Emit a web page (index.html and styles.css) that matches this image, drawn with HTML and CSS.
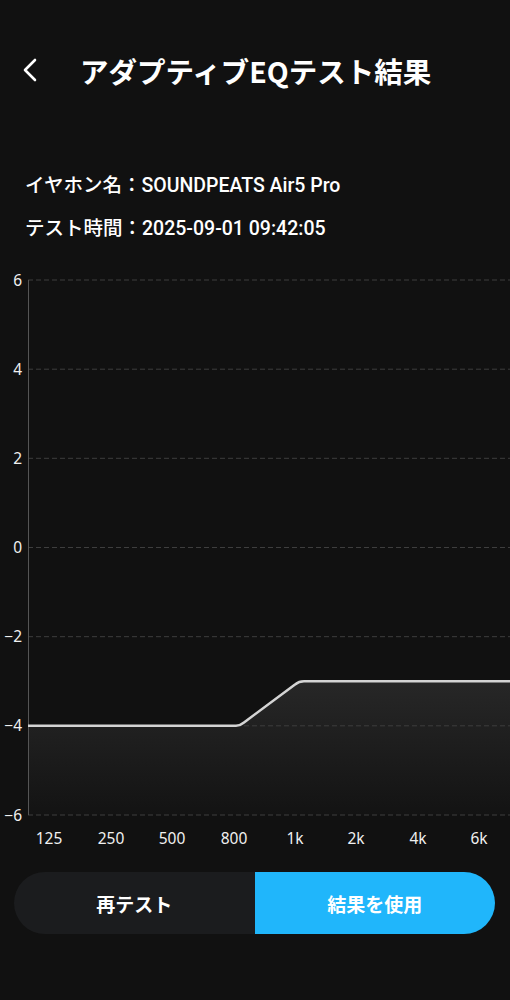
FILE: index.html
```html
<!DOCTYPE html>
<html lang="ja">

<head>
    <meta charset="UTF-8">
    <meta name="viewport" content="width=device-width, initial-scale=1.0">
    <title>アダプティブEQテスト結果</title>
    <link rel="stylesheet" href="styles.css">
</head>

<body>
    <header class="topbar">
        <a class="back" href="#">
            <svg width="20" height="26" viewBox="0 0 20 26">
                <path d="M15 3 L5 13 L15 23" fill="none" stroke="#fff" stroke-width="2.6" stroke-linecap="round" stroke-linejoin="round"/>
            </svg>
        </a>
        <h1>アダプティブEQテスト結果</h1>
    </header>

    <div class="info">
        <p>イヤホン名：SOUNDPEATS Air5 Pro</p>
        <p>テスト時間：2025-09-01 09:42:05</p>
    </div>

    <div class="chart">
        <svg width="510" height="580" viewBox="0 0 510 580">
            <defs>
                <linearGradient id="fillGrad" x1="0" y1="0" x2="0" y2="1">
                    <stop offset="0" stop-color="#272727"/>
                    <stop offset="1" stop-color="#131313"/>
                </linearGradient>
            </defs>
            <!-- 曲線の下の塗り -->
            <path d="M28,455.8 H236 Q240,455.8 244,452.5 L295,414.5 Q299,411.3 304,411.3 H510 V545 H28 Z" fill="url(#fillGrad)"/>
            <g class="grid">
                <line x1="28" y1="10" x2="510" y2="10"/>
                <line x1="28" y1="99.2" x2="510" y2="99.2"/>
                <line x1="28" y1="188.3" x2="510" y2="188.3"/>
                <line x1="28" y1="277.5" x2="510" y2="277.5"/>
                <line x1="28" y1="366.7" x2="510" y2="366.7"/>
                <line x1="28" y1="455.8" x2="510" y2="455.8"/>
                <line x1="28" y1="545" x2="510" y2="545"/>
            </g>
            <line class="axis" x1="28.5" y1="10" x2="28.5" y2="545"/>
            <path class="curve" d="M28,455.8 H236 Q240,455.8 244,452.5 L295,414.5 Q299,411.3 304,411.3 H510"/>
            <g class="ylabels">
                <text x="22" y="15.5">6</text>
                <text x="22" y="104.7">4</text>
                <text x="22" y="193.8">2</text>
                <text x="22" y="283">0</text>
                <text x="22" y="372.2">−2</text>
                <text x="22" y="461.3">−4</text>
                <text x="22" y="550.5">−6</text>
            </g>
            <g class="xlabels">
                <text x="49" y="573.5">125</text>
                <text x="111" y="573.5">250</text>
                <text x="172" y="573.5">500</text>
                <text x="234" y="573.5">800</text>
                <text x="295" y="573.5">1k</text>
                <text x="356" y="573.5">2k</text>
                <text x="418" y="573.5">4k</text>
                <text x="479" y="573.5">6k</text>
            </g>
        </svg>
    </div>

    <div class="actions">
        <button class="btn-retest">再テスト</button>
        <button class="btn-use">結果を使用</button>
    </div>
</body>

</html>
```
FILE: styles.css
```css
body {
    background-color: #111111;
    font-family: Roboto, "Noto Sans CJK JP", sans-serif;
    margin: 0;
    padding: 0;
    color: #fff;
    width: 510px;
}

.topbar {
    display: flex;
    align-items: center;
    height: 44px;
    padding-top: 48px;
    padding-bottom: 3px;
}

.back {
    display: flex;
    margin-left: 20px;
    width: 20px;
}

.topbar h1 {
    margin: 0 0 0 40px;
    font-family: "Noto Sans CJK JP", sans-serif;
    font-size: 28.5px;
    font-weight: 700;
    letter-spacing: 0;
}

.info {
    padding: 77px 0 0 25px;
}

.info p {
    margin: 0 0 15px 0;
    font-size: 19.5px;
    font-weight: 500;
    line-height: 28px;
}

.chart {
    margin-top: 27px;
    height: 580px;
}

.chart svg {
    display: block;
}

.grid line {
    stroke: #3e3e3e;
    stroke-width: 1;
    stroke-dasharray: 5 3;
}

.axis {
    stroke: #555;
    stroke-width: 1;
}

.curve {
    fill: none;
    stroke: #d4d4d4;
    stroke-width: 2.5;
}

.ylabels text {
    fill: #f0f0f0;
    font-family: "Noto Sans", sans-serif;
    font-size: 15.5px;
    text-anchor: end;
}

.xlabels text {
    fill: #f0f0f0;
    font-family: "Noto Sans", sans-serif;
    font-size: 15.5px;
    text-anchor: middle;
}

.actions {
    display: flex;
    margin: 22px 15px 0 14px;
    height: 62px;
}

.actions button {
    flex: 1;
    border: none;
    color: #fff;
    font-family: "Noto Sans CJK JP", sans-serif;
    font-size: 19px;
    font-weight: 700;
    cursor: pointer;
}

.btn-retest {
    background-color: #1b1c1e;
    border-radius: 31px 0 0 31px;
}

.btn-use {
    background-color: #20b6fb;
    border-radius: 0 31px 31px 0;
}
```
